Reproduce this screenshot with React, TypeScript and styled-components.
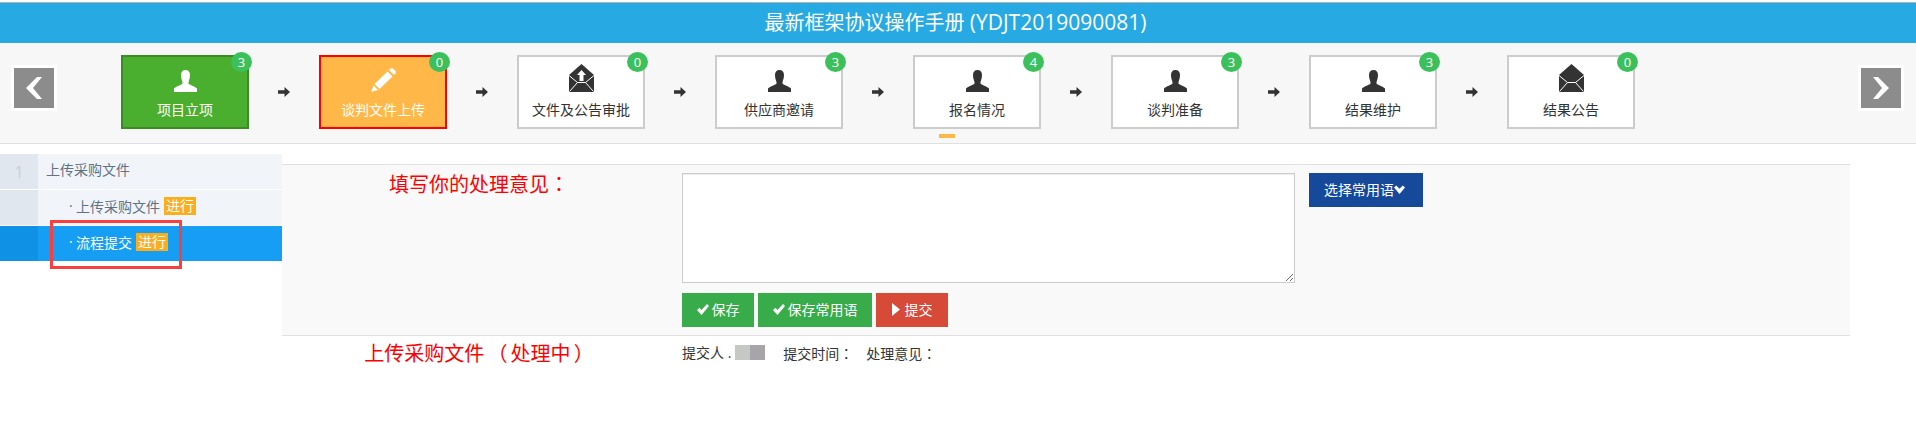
import React from 'react'
import styled, { createGlobalStyle } from 'styled-components'

const GlobalStyle = createGlobalStyle`
  html, body {
    margin: 0;
    padding: 0;
    background: #fff;
    font-family: "Open Sans", "Noto Sans CJK SC", sans-serif;
  }
  * {
    box-sizing: border-box;
  }
`

type IconName = 'user' | 'pencil' | 'upload' | 'mail'

const steps: { title: string; count: number; icon: IconName; state?: 'done' | 'current' }[] = [
  { title: '项目立项', count: 3, icon: 'user', state: 'done' },
  { title: '谈判文件上传', count: 0, icon: 'pencil', state: 'current' },
  { title: '文件及公告审批', count: 0, icon: 'upload' },
  { title: '供应商邀请', count: 3, icon: 'user' },
  { title: '报名情况', count: 4, icon: 'user' },
  { title: '谈判准备', count: 3, icon: 'user' },
  { title: '结果维护', count: 3, icon: 'user' },
  { title: '结果公告', count: 0, icon: 'mail' },
]

const StepIcon = ({ name }: { name: IconName }) => {
  if (name === 'user') {
    return (
      <svg width="23" height="22" viewBox="0 0 23 22" fill="currentColor">
        <path d="M11.5 0C14.6 0 16 2 16 5C16 8 15 10.5 14.5 12V13.5C15 15 21 16 23 18.5V22H0V18.5C2 16 8 15 8.5 13.5V12C8 10.5 7 8 7 5C7 2 8.4 0 11.5 0Z" />
      </svg>
    )
  }
  if (name === 'pencil') {
    return (
      <svg width="25" height="24" viewBox="0 0 25 24" fill="currentColor">
        <path d="M0 24L2.5 17.5L7 22Z" />
        <path d="M3.5 16L16.5 3.5L21.5 8.5L8.5 21Z" />
        <path d="M18 2L19.5 .6Q20.8 -.4 22 .6L24.4 3Q25.4 4.2 24.4 5.4L23 7Z" />
      </svg>
    )
  }
  return (
    <svg width="25" height="28" viewBox="0 0 25 28">
      <path d="M12.5 0L25 11V28H0V11Z" fill="currentColor" />
      <path d="M0 11.5L8.5 18.5H16.5L25 11.5M8.5 18.5L0.5 27.5M16.5 18.5L24.5 27.5" fill="none" stroke="#fff" strokeWidth="1" />
      {name === 'upload' && <path d="M12.5 6L17 11H14.5V17H10.5V11H8Z" fill="#fff" />}
    </svg>
  )
}

const App: React.FC = () => {
  return (
    <Page>
      <GlobalStyle />
      <TitleBar>
        最新框架协议操作手册 <TitleCode>(YDJT2019090081)</TitleCode>
      </TitleBar>
      <Toolbar>
        <NavButton aria-label="上一页">
          <svg width="16" height="22" viewBox="0 0 16 22" fill="#fff">
            <path d="M11 0H16L7 11L16 22H11L0 11Z" />
          </svg>
        </NavButton>
        <StepList>
          {steps.map((step, i) => (
            <React.Fragment key={step.title}>
              {i > 0 && (
                <StepArrow width="12" height="10" viewBox="0 0 12 10" fill="#333">
                  <path d="M0 3.2H6.5V0L12 5L6.5 10V6.8H0Z" />
                </StepArrow>
              )}
              <StepCard $state={step.state}>
                <Count>{step.count}</Count>
                <IconSlot>
                  <StepIcon name={step.icon} />
                </IconSlot>
                <StepTitle>{step.title}</StepTitle>
              </StepCard>
            </React.Fragment>
          ))}
        </StepList>
        <NavButton aria-label="下一页">
          <svg width="16" height="22" viewBox="0 0 16 22" fill="#fff">
            <path d="M5 0H0L9 11L0 22H5L16 11Z" />
          </svg>
        </NavButton>
        <Indicator />
      </Toolbar>
      <Content>
        <Sidebar>
          <SideRow>
            <SideNumber>1</SideNumber>
            <SideHead>上传采购文件</SideHead>
          </SideRow>
          <SideRow>
            <SideNumber />
            <SideItem>
              <Dot>·</Dot>上传采购文件<Tag>进行</Tag>
            </SideItem>
          </SideRow>
          <SideRow $active>
            <SideNumber $active />
            <SideItem $active>
              <Dot>·</Dot>流程提交<Tag>进行</Tag>
            </SideItem>
          </SideRow>
          <Highlight />
        </Sidebar>
        <Main>
          <FormRow>
            <RedLabel>
              填写你的处理意见<Colon>：</Colon>
            </RedLabel>
            <FormBody>
              <InputRow>
                <Opinion />
                <SelectButton>
                  选择常用语
                  <svg width="11" height="9" viewBox="0 0 11 9" fill="#fff">
                    <path d="M0 2.5L2.2 .5L5.5 3.8L8.8 .5L11 2.5L5.5 9Z" />
                  </svg>
                </SelectButton>
              </InputRow>
              <ButtonRow>
                <ActionButton $width={72}>
                  <CheckIcon />
                  保存
                </ActionButton>
                <ActionButton $width={114}>
                  <CheckIcon />
                  保存常用语
                </ActionButton>
                <ActionButton $width={72} $danger>
                  <svg width="8" height="13" viewBox="0 0 8 13" fill="#fff">
                    <path d="M0 0L8 6.5L0 13Z" />
                  </svg>
                  提交
                </ActionButton>
              </ButtonRow>
            </FormBody>
          </FormRow>
          <HistoryRow>
            <HistoryLabel>上传采购文件 （ 处理中 ）</HistoryLabel>
            <HistoryMeta>
              <span>
                提交人 .
                <Mosaic>
                  <MosaicCell $color="#c6c8c5" />
                  <MosaicCell $color="#a8a5aa" />
                </Mosaic>
              </span>
              <MetaItem>
                提交时间<Colon>：</Colon>
              </MetaItem>
              <MetaItem>
                处理意见<Colon>：</Colon>
              </MetaItem>
            </HistoryMeta>
          </HistoryRow>
        </Main>
      </Content>
    </Page>
  )
}

const CheckIcon = () => (
  <svg width="12" height="11" viewBox="0 0 12 11" fill="#fff">
    <path d="M0 6L2.5 3.8L4.5 6L10 0L12 2L4.5 11Z" />
  </svg>
)

export default App

const Page = styled.div`
  width: 1916px;
  height: 438px;
  overflow: hidden;
  background: #fff;
  padding-top: 2px;
`

const TitleBar = styled.div`
  height: 41px;
  border-top: 1px solid #b4b4b4;
  background: #27a9e3;
  color: #fff;
  font-size: 20px;
  line-height: 38px;
  padding-right: 5px;
  text-align: center;
`

const TitleCode = styled.span`
  font-size: 21px;
`

const Toolbar = styled.div`
  position: relative;
  height: 101px;
  display: flex;
  align-items: center;
  justify-content: space-between;
  padding: 0 12px 11px 11px;
  background: #f7f7f7;
  border-bottom: 1px solid #e0e0e0;
`

const NavButton = styled.button`
  width: 46px;
  height: 46px;
  padding: 0;
  display: flex;
  align-items: center;
  justify-content: center;
  background: #8c8c8c;
  border: 3px solid #fff;
`

const StepList = styled.div`
  display: flex;
  align-items: center;
  flex: 1;
  padding: 9px 0 0 64px;
  gap: 29px;
`

const StepArrow = styled.svg`
  flex-shrink: 0;
`

const StepCard = styled.div<{ $state?: 'done' | 'current' }>`
  position: relative;
  width: 128px;
  height: 74px;
  flex-shrink: 0;
  display: flex;
  flex-direction: column;
  align-items: center;
  border: 2px solid
    ${({ $state }) =>
      $state === 'done' ? '#3d8b25' : $state === 'current' ? '#ff0000' : '#cccccc'};
  background: ${({ $state }) =>
    $state === 'done' ? '#4aae2e' : $state === 'current' ? '#ffb848' : '#ffffff'};
  color: ${({ $state }) => ($state ? '#ffffff' : '#333333')};
`

const Count = styled.span`
  position: absolute;
  top: -5px;
  right: -5px;
  width: 21px;
  height: 20px;
  border-radius: 50%;
  background: #3cc05c;
  color: #fff;
  font-size: 13px;
  line-height: 20px;
  text-align: center;
`

const IconSlot = styled.div`
  height: 38px;
  display: flex;
  align-items: flex-end;
  justify-content: center;
  padding-bottom: 3px;
`

const StepTitle = styled.div`
  font-size: 14px;
  line-height: 20px;
  margin-top: 5px;
  color: inherit;
`

const Indicator = styled.span`
  position: absolute;
  left: 939px;
  bottom: 5px;
  width: 16px;
  height: 4px;
  background: #ffb848;
`

const Content = styled.div`
  display: flex;
  align-items: flex-start;
`

const Sidebar = styled.div`
  position: relative;
  width: 282px;
  margin-top: 10px;
  flex-shrink: 0;
`

const SideRow = styled.div<{ $active?: boolean }>`
  display: flex;
  height: ${({ $active }) => ($active ? '35px' : '36px')};
  border-bottom: ${({ $active }) => ($active ? 'none' : '1px solid #fff')};
  background: ${({ $active }) => ($active ? '#169ef4' : '#f1f5f9')};
`

const SideNumber = styled.div<{ $active?: boolean }>`
  width: 38px;
  flex-shrink: 0;
  background: ${({ $active }) => ($active ? '#0f91e6' : '#e0e7ef')};
  color: #c3d0dc;
  font-size: 16px;
  line-height: 37px;
  text-align: center;
`

const SideHead = styled.div`
  padding-left: 8px;
  font-size: 14px;
  line-height: 31px;
  color: #5e7388;
`

const SideItem = styled.div<{ $active?: boolean }>`
  display: flex;
  align-items: center;
  padding: 0 0 4px 31px;
  font-size: 14px;
  color: ${({ $active }) => ($active ? '#fff' : '#5e7388')};
`

const Dot = styled.span`
  width: 7px;
`

const Tag = styled.span`
  width: 32px;
  height: 18px;
  margin-left: 4px;
  background: #fbae1c;
  color: #fff;
  font-size: 14px;
  line-height: 18px;
  text-align: center;
`

const Highlight = styled.div`
  position: absolute;
  left: 50px;
  top: 66px;
  width: 132px;
  height: 49px;
  border: 3px solid #f94040;
`

const Main = styled.div`
  width: 1568px;
  margin-top: 20px;
`

const FormRow = styled.div`
  display: flex;
  height: 172px;
  border-top: 1px solid #e0e0e0;
  border-bottom: 1px solid #e0e0e0;
  background: #f9f9f9;
`

const RedLabel = styled.div`
  width: 386px;
  flex-shrink: 0;
  margin-right: 14px;
  padding: 4px 0 0 8px;
  color: #ff0000;
  font-size: 20px;
  line-height: 30px;
  text-align: center;
  white-space: nowrap;
`

const HistoryLabel = styled(RedLabel)`
  padding-top: 0;
  word-spacing: -2px;
`

/* 全角标点居中的字形 */
const Colon = styled.span`
  font-family: "Noto Sans CJK TC", sans-serif;
`

const FormBody = styled.div`
  padding-top: 8px;
`

const InputRow = styled.div`
  display: flex;
  align-items: flex-start;
  gap: 14px;
`

const Opinion = styled.textarea`
  display: block;
  width: 613px;
  height: 110px;
  margin: 0;
  background: #fff;
  border: 1px solid #ccc;
  box-shadow: inset 0 1px 1px rgba(0, 0, 0, 0.075);
`

const SelectButton = styled.button`
  width: 114px;
  height: 34px;
  display: flex;
  align-items: center;
  justify-content: center;
  padding: 0 3px 2px 0;
  border: 0;
  background: #16499a;
  color: #fff;
  font: inherit;
  font-size: 14px;
`

const ButtonRow = styled.div`
  display: flex;
  gap: 4px;
  margin-top: 10px;
`

const ActionButton = styled.button<{ $width: number; $danger?: boolean }>`
  width: ${({ $width }) => $width}px;
  height: 34px;
  display: flex;
  align-items: center;
  justify-content: center;
  gap: ${({ $danger }) => ($danger ? '5px' : '3px')};
  padding: 0 0 2px;
  border: 0;
  background: ${({ $danger }) => ($danger ? '#d84a38' : '#38ab4a')};
  color: #fff;
  font: inherit;
  font-size: 14px;
`

const HistoryRow = styled.div`
  display: flex;
  padding-top: 3px;
`

const HistoryMeta = styled.div`
  display: flex;
  color: #333;
  font-size: 14px;
  line-height: 28px;
`

const MetaItem = styled.span`
  margin-left: 18px;

  & + & {
    margin-left: 13px;
  }
`

const Mosaic = styled.span`
  display: inline-flex;
  height: 15px;
  vertical-align: -2px;
  margin-left: 4px;
`

const MosaicCell = styled.span<{ $color: string }>`
  width: 15px;
  background: ${({ $color }) => $color};
`
